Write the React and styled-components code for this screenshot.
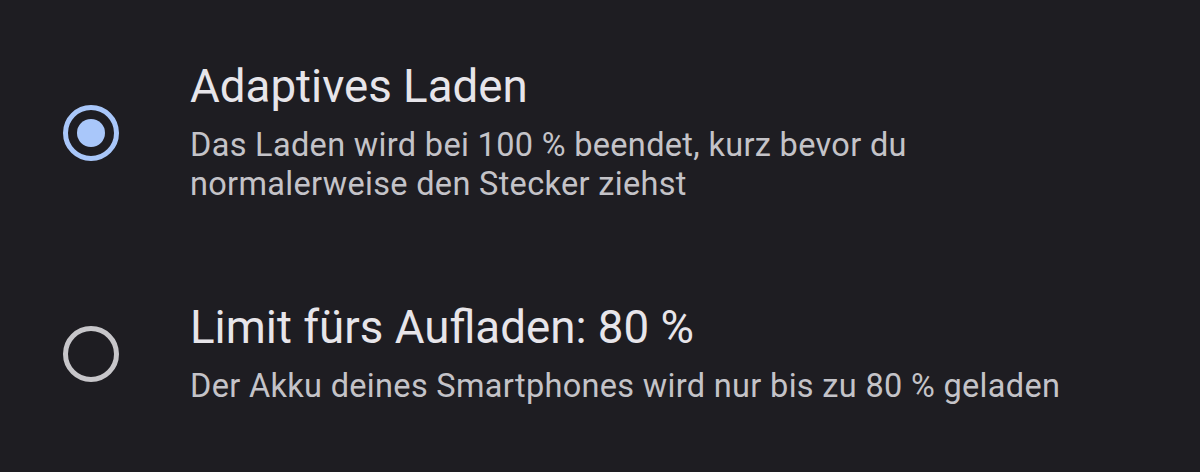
import React, { useState } from 'react';
import styled, { createGlobalStyle } from 'styled-components';

const GlobalStyle = createGlobalStyle`
  html, body {
    margin: 0;
    padding: 0;
    background: #1e1d22;
  }
  body {
    font-family: Roboto, "Noto Sans", Arial, sans-serif;
    -webkit-font-smoothing: antialiased;
  }
`;

const Screen = styled.div`
  width: 1200px;
  height: 472px;
  background: #1e1d22;
  box-sizing: border-box;
  padding-top: 61px;
  display: flex;
  flex-direction: column;
  gap: 98px;
  overflow: hidden;
`;

const Option = styled.label`
  display: flex;
  align-items: center;
  padding-left: 63px;
  cursor: pointer;
`;

const Radio = styled.span`
  flex: 0 0 auto;
  width: 56px;
  height: 56px;
  box-sizing: border-box;
  border-radius: 50%;
  border: 5px solid ${p => (p.$checked ? '#a9c7fa' : '#c7c6ca')};
  display: flex;
  align-items: center;
  justify-content: center;
  margin-right: 71px;

  &::after {
    content: '';
    width: 28px;
    height: 28px;
    border-radius: 50%;
    background: #a9c7fa;
    display: ${p => (p.$checked ? 'block' : 'none')};
  }
`;

const Texts = styled.div`
  width: 885px;
  display: flex;
  flex-direction: column;
`;

const Title = styled.div`
  color: #e7e5ea;
  font-size: 45.7px;
  line-height: 52px;
`;

const Summary = styled.div`
  color: #c4c3c8;
  font-size: 32.5px;
  line-height: 39px;
  letter-spacing: 0.32px;
  margin-top: 13px;
`;

const options = [
  {
    id: 'adaptive',
    title: 'Adaptives Laden',
    summary: 'Das Laden wird bei 100 % beendet, kurz bevor du normalerweise den Stecker ziehst',
  },
  {
    id: 'limit',
    title: 'Limit fürs Aufladen: 80 %',
    summary: 'Der Akku deines Smartphones wird nur bis zu 80 % geladen',
  },
];

export default function App() {
  const [selected, setSelected] = useState('adaptive');

  return (
    <>
      <GlobalStyle />
      <Screen>
        {options.map(opt => (
          <Option key={opt.id} onClick={() => setSelected(opt.id)}>
            <Radio $checked={selected === opt.id} />
            <Texts>
              <Title>{opt.title}</Title>
              <Summary>{opt.summary}</Summary>
            </Texts>
          </Option>
        ))}
      </Screen>
    </>
  );
}
